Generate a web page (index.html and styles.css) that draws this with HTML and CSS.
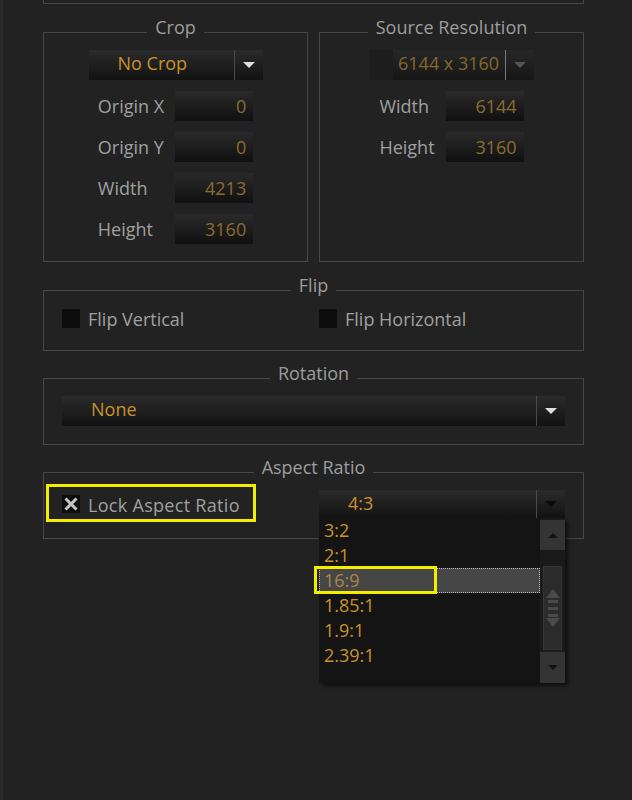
FILE: index.html
```html
<!DOCTYPE html>
<html>
<head>
<meta charset="utf-8">
<title>Image Settings</title>
<link rel="stylesheet" href="styles.css">
</head>
<body>
<div class="page">
  <div class="top-box"></div>

  <div class="pair">
    <fieldset class="group group-half">
      <legend>Crop</legend>
      <div class="combo combo-crop">
        <span class="combo-text">No Crop</span>
        <span class="combo-btn"><span class="tri tri-down tri-light"></span></span>
      </div>
      <div class="fields">
        <span class="flabel">Origin X</span><span class="num">0</span>
        <span class="flabel">Origin Y</span><span class="num">0</span>
        <span class="flabel">Width</span><span class="num">4213</span>
        <span class="flabel">Height</span><span class="num">3160</span>
      </div>
    </fieldset>

    <fieldset class="group group-half">
      <legend>Source Resolution</legend>
      <div class="combo combo-src">
        <span class="combo-edge"></span>
        <span class="combo-text">6144 x 3160</span>
        <span class="combo-btn"><span class="tri tri-down tri-dim"></span></span>
      </div>
      <div class="fields">
        <span class="flabel">Width</span><span class="num">6144</span>
        <span class="flabel">Height</span><span class="num">3160</span>
      </div>
    </fieldset>
  </div>

  <fieldset class="group group-flip">
    <legend>Flip</legend>
    <div class="opts">
      <div class="check"><span class="box"></span><span class="check-text">Flip Vertical</span></div>
      <div class="check"><span class="box"></span><span class="check-text">Flip Horizontal</span></div>
    </div>
  </fieldset>

  <fieldset class="group group-rot">
    <legend>Rotation</legend>
    <div class="combo combo-rot">
      <span class="combo-text">None</span>
      <span class="combo-btn"><span class="tri tri-down tri-light"></span></span>
    </div>
  </fieldset>

  <fieldset class="group group-aspect">
    <legend>Aspect Ratio</legend>
    <div class="opts opts-aspect">
      <div class="check check-lock">
        <span class="box box-x">
          <svg width="18" height="18" viewBox="0 0 18 18"><path d="M3.5 3.5 L14.5 14.5 M14.5 3.5 L3.5 14.5" stroke="#c6c6c6" stroke-width="3" fill="none"/></svg>
        </span>
        <span class="check-text lock-text">Lock Aspect Ratio</span>
        <span class="mark mark-lock"></span>
      </div>
      <div class="combo combo-aspect">
        <span class="combo-text">4:3</span>
        <span class="combo-btn"><span class="tri tri-down tri-dark"></span></span>
        <div class="popup">
          <ul class="items">
            <li>3:2</li>
            <li>2:1</li>
            <li class="sel">16:9<span class="mark mark-item"></span></li>
            <li>1.85:1</li>
            <li>1.9:1</li>
            <li>2.39:1</li>
          </ul>
          <div class="sbar">
            <div class="sbtn"><span class="tri tri-up tri-scroll"></span></div>
            <div class="strack">
              <div class="thumb">
                <svg width="14" height="38" viewBox="0 0 14 38">
                  <polygon points="7,0 14,9 0,9" fill="#4a4a4a"/>
                  <rect x="2" y="11" width="10" height="3" fill="#4a4a4a"/>
                  <rect x="2" y="18" width="10" height="3" fill="#4a4a4a"/>
                  <rect x="2" y="25" width="10" height="3" fill="#4a4a4a"/>
                  <polygon points="0,29 14,29 7,38" fill="#4a4a4a"/>
                </svg>
              </div>
            </div>
            <div class="sbtn sbtn-down"><span class="tri tri-down tri-scroll"></span></div>
          </div>
        </div>
      </div>
    </div>
  </fieldset>
</div>
</body>
</html>
```

FILE: styles.css
```css
html, body {
  margin: 0;
  padding: 0;
}

body {
  background: #222222;
  font-family: "Open Sans", "Noto Sans", sans-serif;
  font-size: 18px;
  color: #9e9e9e;
}

.page {
  width: 541px;
  min-height: 800px;
  border-left: 3px solid #2b2b2b;
  padding-left: 40px;
}

.top-box {
  height: 3px;
  border: 1px solid #474747;
  border-top: 0;
}

.pair {
  display: flex;
  gap: 11px;
  margin-top: 12px;
}

.group {
  margin: 0;
  min-width: 0;
  border: 1px solid #474747;
  padding: 1px 0 17px;
}

.group-half {
  flex: 1 1 0;
}

legend {
  margin: 0 auto;
  padding: 0 8px 11px;
  line-height: 22px;
  font-size: 18px;
  color: #9d9d9d;
}

/* combo boxes */
.combo {
  display: flex;
  height: 30px;
  line-height: 30px;
  background: linear-gradient(#2b2b2b, #121212);
  color: #c8922b;
  box-sizing: border-box;
}

.combo-text {
  flex: 1;
  padding-left: 29px;
  white-space: nowrap;
  line-height: 27px;
}

.combo-btn {
  flex: none;
  width: 29px;
  box-sizing: border-box;
  border-left: 1px solid #4b4b4b;
  display: flex;
  align-items: center;
  justify-content: center;
}

.combo-crop {
  width: 174px;
  margin: 0 auto;
}

.combo-src {
  width: 165px;
  margin: 0 auto;
  color: #86672b;
  background: linear-gradient(#272727, #161616);
}

.combo-src .combo-text {
  padding-left: 5px;
}

.combo-src .combo-btn {
  border-left-color: #7a7a7a;
}

.combo-edge {
  flex: none;
  width: 24px;
  background: #1d1d1d;
}

.tri {
  width: 0;
  height: 0;
  border-left: 6px solid transparent;
  border-right: 6px solid transparent;
}

.tri-down {
  border-top: 6px solid #dcdcdc;
}

.tri-up {
  border-bottom: 6px solid #dcdcdc;
}

.tri-light {
  border-top-color: #dedede;
}

.tri-dim {
  border-top-color: #555555;
}

.tri-dark {
  border-top-color: #0a0a0a;
}

.tri.tri-scroll {
  border-left-width: 5px;
  border-right-width: 5px;
}

.tri-up.tri-scroll {
  border-bottom: 5px solid #121212;
}

.tri-down.tri-scroll {
  border-top: 5px solid #121212;
}

/* numeric fields */
.fields {
  display: grid;
  grid-template-columns: auto 78px;
  column-gap: 11px;
  row-gap: 11px;
  justify-content: center;
  align-items: center;
  margin-top: 11px;
}

.flabel {
  white-space: nowrap;
  color: #a0a0a0;
}

.num {
  height: 30px;
  line-height: 30px;
  background: linear-gradient(#2a2a2a, #101010);
  color: #8c6c2e;
  text-align: right;
  padding-right: 7px;
}

/* flip */
.group-flip {
  margin-top: 12px;
  padding: 2px 18px 22px;
}

.opts {
  display: grid;
  grid-template-columns: 257px 1fr;
  align-items: center;
}

.check {
  display: flex;
  align-items: center;
  gap: 8px;
  height: 19px;
  white-space: nowrap;
}

.check-text {
  color: #a0a0a0;
  line-height: 19px;
  padding-top: 2px;
}

.lock-text {
  letter-spacing: 0.3px;
}

.box {
  flex: none;
  width: 18px;
  height: 19px;
  background: #0d0d0d;
}

/* rotation */
.group-rot {
  margin-top: 11px;
  padding: 1px 18px 18px;
}

/* aspect */
.group-aspect {
  margin-top: 11px;
  padding: 1px 18px 20px;
}

.opts-aspect {
  height: 28px;
}

.check-lock {
  position: relative;
  height: 28px;
}

.box-x {
  height: 18px;
  display: flex;
}

.mark {
  position: absolute;
  box-sizing: border-box;
  border: 3px solid #f3ee00;
  pointer-events: none;
}

.mark-lock {
  left: -16px;
  top: -6px;
  width: 210px;
  height: 38px;
}

.combo-aspect {
  position: relative;
  height: 28px;
  line-height: 28px;
}

.combo-aspect .combo-text {
  line-height: 26px;
}

.popup {
  position: absolute;
  top: 28px;
  left: 0;
  width: 246px;
  height: 165px;
  display: flex;
  background: #141414;
  box-shadow: 3px 3px 4px rgba(0, 0, 0, 0.55);
  z-index: 2;
}

.items {
  flex: 1;
  list-style: none;
  margin: 0;
  padding: 0;
}

.items li {
  position: relative;
  height: 25px;
  line-height: 25px;
  padding-left: 5px;
  color: #c8922b;
}

.items li.sel {
  background: #464646;
  outline: 1px dotted #b8b8b8;
  outline-offset: -1px;
  color: #a8874a;
}

.mark-item {
  left: -5px;
  top: -2px;
  width: 123px;
  height: 28px;
}

.sbar {
  flex: none;
  width: 25px;
  display: flex;
  flex-direction: column;
  padding-top: 2px;
  box-sizing: border-box;
  background: #1a1a1a;
}

.sbtn {
  flex: none;
  height: 30px;
  background: #343434;
  display: flex;
  align-items: center;
  justify-content: center;
}

.sbtn-down {
  height: 31px;
}

.strack {
  flex: 1;
  padding: 16px 3px 2px;
  display: flex;
}

.thumb {
  flex: 1;
  background: #2b2b2b;
  border: 1px solid #363636;
  display: flex;
  align-items: center;
  justify-content: center;
}
```
